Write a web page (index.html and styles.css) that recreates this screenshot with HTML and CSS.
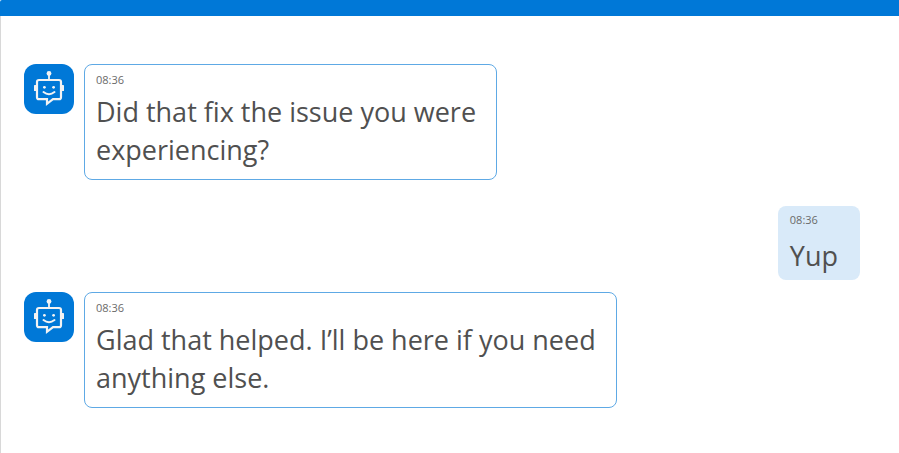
FILE: index.html
```html
<!DOCTYPE html>
<html lang="en">
<head>
    <meta charset="UTF-8">
    <meta name="viewport" content="width=device-width, initial-scale=1.0">
    <title>Support Chat</title>
    <link rel="stylesheet" href="styles.css">
</head>
<body>
    <!-- Bot icon, shared by all bot messages -->
    <svg class="icon-defs" aria-hidden="true">
        <symbol id="bot" viewBox="0 0 50 50">
            <g fill="none" stroke="#f3f3f3" stroke-width="2.2">
                <path d="M25 10v6" stroke-width="1.8"/>
                <path d="M15 16h20q2 0 2 2v15.2q0 2-2 2H29L23 39.8V35.2H15q-2 0-2-2V18q0-2 2-2z"/>
                <path d="M19.5 28q5.5 4.4 11 0" stroke-width="2" stroke-linecap="round"/>
            </g>
            <g fill="#f3f3f3">
                <circle cx="25" cy="9.4" r="2.4"/>
                <rect x="10" y="21" width="3" height="6" rx="0.6"/>
                <rect x="37" y="21" width="3" height="6" rx="0.6"/>
                <circle cx="20.4" cy="23.3" r="1.4"/>
                <circle cx="29.6" cy="23.3" r="1.4"/>
            </g>
        </symbol>
    </svg>

    <header class="top-bar"></header>

    <main class="chat">
        <div class="message">
            <div class="avatar"><svg role="img" aria-label="Bot"><use href="#bot"/></svg></div>
            <div class="bubble">
                <time class="time">08:36</time>
                <p class="text">Did that fix the issue you were<br>experiencing?</p>
            </div>
        </div>

        <div class="message message-user">
            <div class="bubble bubble-user">
                <time class="time">08:36</time>
                <p class="text">Yup</p>
            </div>
        </div>

        <div class="message">
            <div class="avatar"><svg role="img" aria-label="Bot"><use href="#bot"/></svg></div>
            <div class="bubble">
                <time class="time">08:36</time>
                <p class="text">Glad that helped. I’ll be here if you need<br>anything else.</p>
            </div>
        </div>
    </main>
</body>
</html>
```

FILE: styles.css
```css
* {
    box-sizing: border-box;
}

body {
    margin: 0;
    min-height: 100vh;
    display: flex;
    flex-direction: column;
    background-color: #fff;
    color: #505050;
    font-family: "Open Sans", "Noto Sans", sans-serif;
}

.icon-defs {
    display: none;
}

.top-bar {
    height: 16px;
    background-color: #0078d7;
    border-top-left-radius: 2px;
}

.chat {
    flex: 1;
    padding: 48px 39px 45px 23px;
    border-left: 1px solid #d8d8d8;
}

.message {
    display: flex;
    align-items: flex-start;
    gap: 10px;
}

.message-user {
    justify-content: flex-end;
    margin: 26px 0 12px;
}

.avatar {
    flex: none;
    width: 50px;
    height: 50px;
    background-color: #0078d7;
    border-radius: 12px;
}

.avatar svg {
    display: block;
    width: 100%;
    height: 100%;
}

.bubble {
    padding: 6px 20px 10px 11px;
    border: 1px solid #5ea9e5;
    border-radius: 8px;
}

.bubble-user {
    padding: 5px 22px 5px 12px;
    border: none;
    background-color: #d9eaf9;
}

.time {
    display: block;
    color: #6a6a6a;
    font-size: 11px;
    line-height: 18px;
}

.text {
    margin: 4px 0 0;
    font-size: 27px;
    line-height: 38px;
}

.bubble-user .text {
    margin-top: 8px;
}
```
